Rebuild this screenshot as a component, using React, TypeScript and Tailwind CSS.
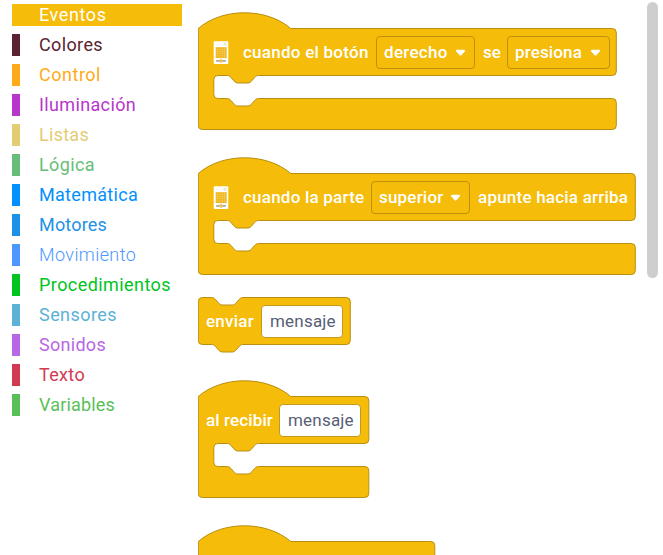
import type { ReactNode } from "react";

const categories = [
  { name: "Eventos", bar: "bg-[#f5bc09] w-[170px]", text: "text-white tracking-[0.6px]" },
  { name: "Colores", bar: "bg-[#5b2331]", text: "text-[#5b2331] tracking-[0.37px]" },
  { name: "Control", bar: "bg-[#ffab19]", text: "text-[#ffab19] tracking-[0.52px]" },
  { name: "Iluminación", bar: "bg-[#b736ca]", text: "text-[#b736ca] tracking-[0.36px]" },
  { name: "Listas", bar: "bg-[#e3cc74]", text: "text-[#e3cc74] tracking-[0.28px]" },
  { name: "Lógica", bar: "bg-[#67bd77]", text: "text-[#67bd77] tracking-[0.39px]" },
  { name: "Matemática", bar: "bg-[#0390fc]", text: "text-[#0390fc] tracking-[0.3px]" },
  { name: "Motores", bar: "bg-[#1d91e6]", text: "text-[#1d91e6] tracking-[0.18px]" },
  { name: "Movimiento", bar: "bg-[#4c97ff]", text: "text-[#4c97ff] font-light tracking-[0.4px]" },
  { name: "Procedimientos", bar: "bg-[#00c41f]", text: "text-[#00c41f] tracking-[0.43px]" },
  { name: "Sensores", bar: "bg-[#5cb1d6]", text: "text-[#5cb1d6] tracking-[0.44px]" },
  { name: "Sonidos", bar: "bg-[#b966e4]", text: "text-[#b966e4] tracking-[0.29px]" },
  { name: "Texto", bar: "bg-[#d23a53]", text: "text-[#d23a53] tracking-[0.33px]" },
  { name: "Variables", bar: "bg-[#59c059]", text: "text-[#59c059] tracking-[0.17px]" },
];

const notch =
  "c1.5 0 2.5 .8 3.5 1.8 l3.2 3.6 c1 1.1 2 2.1 3.8 2.1 h10 c1.8 0 2.8 -1 3.8 -2.1 l3.2 -3.6 c1 -1 2 -1.8 3.5 -1.8";
const notchBack =
  "c-1.5 0 -2.5 .8 -3.5 1.8 l-3.2 3.6 c-1 1.1 -2 2.1 -3.8 2.1 h-10 c-1.8 0 -2.8 -1 -3.8 -2.1 l-3.2 -3.6 c-1 -1 -2 -1.8 -3.5 -1.8";

// Event block: rounded hat, one input row and an open statement slot.
const hatPath = (w: number) =>
  `M0 0 c24 -21 68 -21 92.5 0 H${w - 4} q4 0 4 4 V43 q0 4 -4 4 H60 ${notchBack} H19.5 q-4 0 -4 4 V66 q0 4 4 4 H29 ${notch} H${w - 4} q4 0 4 4 V97 q0 4 -4 4 H4 q-4 0 -4 -4 Z`;

// Stackable command block with a notch above and a tab below.
const stackPath = (w: number) =>
  `M0 4 q0 -4 4 -4 H13.5 ${notch} H${w - 4} q4 0 4 4 V43 q0 4 -4 4 H44.5 ${notchBack} H4 q-4 0 -4 -4 Z`;

function Block({ width, stack, className, children }: { width: number; stack?: boolean; className: string; children?: ReactNode }) {
  return (
    <div className={`relative shrink-0 ${className}`}>
      <svg className="absolute -top-5 left-0" width={width + 2} height="124">
        <path
          d={stack ? stackPath(width) : hatPath(width)}
          transform="translate(0.3 20.5)"
          fill="#f5bc09"
          stroke="#b98f12"
        />
      </svg>
      <div className="relative flex h-12 items-center pt-px pl-2 text-[17px] whitespace-nowrap text-white">{children}</div>
    </div>
  );
}

function Dropdown({ className, children }: { className: string; children: ReactNode }) {
  return (
    <div className={`flex h-[33px] shrink-0 items-center justify-between rounded-[4px] border border-[#c09108] pr-2 pl-[7px] font-medium ${className}`}>
      <span className="pt-px">{children}</span>
      <svg width="11" height="8" viewBox="0 0 11 8">
        <path d="M2 .8 H9 Q10.8 1.1 9.7 2.6 L6.6 6 Q5.5 7 4.4 6 L1.3 2.6 Q.2 1.1 2 .8 Z" fill="#fff" />
      </svg>
    </div>
  );
}

function TextField() {
  return (
    <div className="flex h-[33px] w-[82px] shrink-0 items-center rounded-[4px] border border-[#c39a20] bg-white pt-px pl-2 tracking-[0.2px] text-[#575e75]">
      mensaje
    </div>
  );
}

function Device() {
  const steps = [0, 1, 2, 3, 4];
  return (
    <svg width="16" height="24" viewBox="0 0 16 24" className="ml-[7px] shrink-0">
      <rect x=".7" y=".3" width="14.6" height="22.6" rx="1" fill="#fff" />
      <circle cx="12.2" cy="3.2" r="1.2" fill="#fff" stroke="#ddc98d" strokeWidth=".6" />
      <path d="M4 3.2h1M1.5 16h.8" stroke="#d8ca9f" strokeWidth=".8" />
      <rect x="2.7" y="6.2" width="11" height="11" fill="#f8da85" />
      {steps.map((row) =>
        steps.map((col) => (
          <rect key={`${row}-${col}`} x={2.8 + col * 2.2} y={6.3 + row * 2.2} width="1.9" height="1.9" fill="#eeb417" />
        )),
      )}
      <rect x="3" y="19" width="10" height="1.8" rx=".8" fill="#9caaa0" />
      <circle cx="8" cy="19.9" r="1.9" fill="#f1c261" />
    </svg>
  );
}

export default function App() {
  return (
    <div className="flex h-[555px] w-[663px] overflow-hidden bg-white font-['Roboto',sans-serif]">
      <nav className="flex w-[198px] shrink-0 flex-col gap-2 pt-1 pl-3">
        {categories.map((c, i) => (
          <div key={c.name} className={`flex h-[22px] shrink-0 items-center ${i === 0 ? c.bar : ""}`}>
            <span className={`h-full w-2 shrink-0 ${i === 0 ? "" : c.bar}`} />
            <span className={`ml-[19px] text-[18px] leading-[22px] ${c.text}`}>{c.name}</span>
          </div>
        ))}
      </nav>
      <main className="flex min-w-0 flex-1 flex-col pt-7">
        <Block width={418} className="h-[102px]">
          <Device />
          <span className="ml-[14px] w-[133px] shrink-0 font-medium tracking-[0.25px]">cuando el botón</span>
          <Dropdown className="w-[99px] tracking-[0.3px]">derecho</Dropdown>
          <span className="ml-2 w-[24px] shrink-0 font-medium">se</span>
          <Dropdown className="w-[103px] tracking-[0.14px]">presiona</Dropdown>
        </Block>
        <Block width={437} className="mt-[43px] h-[102px]">
          <Device />
          <span className="ml-[14px] w-[128px] shrink-0 font-medium tracking-[0.22px]">cuando la parte</span>
          <Dropdown className="w-[99px] tracking-[0.2px]">superior</Dropdown>
          <span className="ml-2 font-medium tracking-[0.22px]">apunte hacia arriba</span>
        </Block>
        <Block stack width={152} className="mt-[22px] h-14">
          <span className="w-[55px] shrink-0 font-medium tracking-[0.25px]">enviar</span>
          <TextField />
        </Block>
        <Block width={170.5} className="mt-[43px] h-[102px]">
          <span className="w-[73px] shrink-0 font-medium tracking-[0.12px]">al recibir</span>
          <TextField />
        </Block>
        <Block width={236.5} className="mt-[43px] h-[102px]" />
      </main>
      <div className="mt-0.5 mr-[5px] h-[276px] w-[11px] shrink-0 rounded-full bg-[#cecece]" />
    </div>
  );
}
